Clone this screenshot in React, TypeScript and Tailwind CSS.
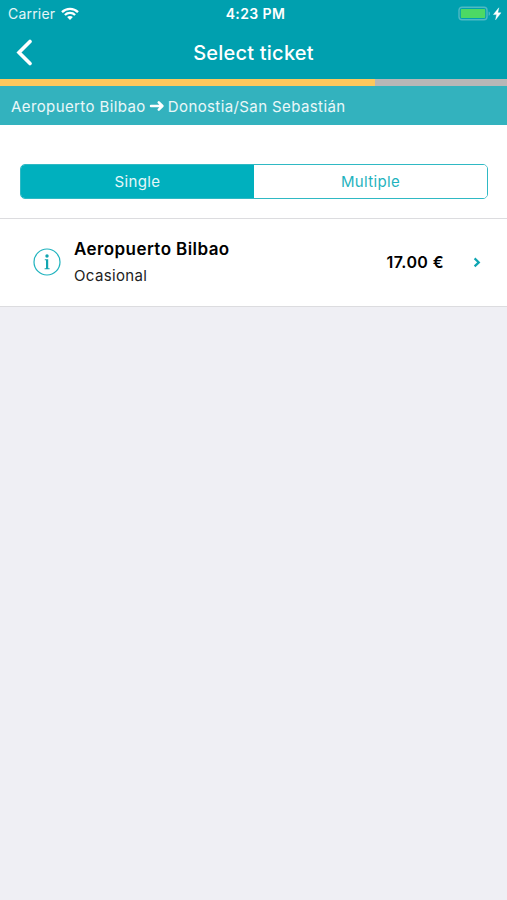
import { useState } from 'react'

const tabs = ['Single', 'Multiple']

const tickets = [
  {
    title: 'Aeropuerto Bilbao',
    type: 'Ocasional',
    price: '17.00 €',
  },
]

function WifiIcon() {
  return (
    <svg width="18" height="13" viewBox="0 0 18 13" fill="none" stroke="#fff" strokeWidth="2.3">
      <path d="M1 5.1C5.4 .7 12.6 .7 17 5.1" />
      <path d="M3.9 8C6.7 5.2 11.3 5.2 14.1 8" />
      <path d="M6.1 10.1C7.7 8.6 10.3 8.6 11.9 10.1L9 13Z" fill="#fff" stroke="none" />
    </svg>
  )
}

function BatteryIcon() {
  return (
    <svg width="46" height="16" viewBox="0 0 46 16">
      <rect x="2" y="1.2" width="28" height="12.6" rx="3" fill="none" stroke="#4fb9c4" strokeWidth="1.4" />
      <rect x="3.8" y="3" width="24.4" height="9" rx=".8" fill="#4cd964" />
      <path d="M31.6 5.4C33.5 6 33.5 9.2 31.6 9.8Z" fill="#4fb9c4" />
      <path d="M41.8 1.8L36.4 8.6H39.6L38.6 13.8L44 6.8H40.8Z" fill="#fff" stroke="#fff" strokeWidth=".4" />
    </svg>
  )
}

function InfoIcon() {
  return (
    <svg width="28" height="28" viewBox="0 0 28 28">
      <circle cx="14" cy="14" r="13" fill="none" stroke="#1fb3be" strokeWidth="1.2" />
      <circle cx="14" cy="8" r="1.7" fill="#12a5b0" />
      <path d="M11.8 11.3H15.2V20.2H16.6V21.2H11.6V20.2H13V12.3H11.8Z" fill="#12a5b0" />
    </svg>
  )
}

function StatusBar() {
  return (
    <div className="grid h-[27px] grid-cols-3 items-center pr-1 pl-2 text-white">
      <div className="flex items-center gap-1.5 text-[14px] tracking-[0.2px]">
        <span className="text-white/90">Carrier</span>
        <WifiIcon />
      </div>
      <div className="text-center text-[14px] font-semibold tracking-[0.4px]">4:23 PM</div>
      <div className="flex justify-end">
        <BatteryIcon />
      </div>
    </div>
  )
}

export default function App() {
  const [active, setActive] = useState('Single')

  return (
    <div className="flex min-h-screen w-full flex-col bg-[#efeff4] font-['Inter',sans-serif]">
      <header className="h-[79px] bg-[#00a0af]">
        <StatusBar />
        <div className="grid h-[50px] grid-cols-[64px_1fr_64px] items-center text-white">
          <button className="pl-4" aria-label="Back">
            <svg width="18" height="28" viewBox="0 0 18 28" fill="none" stroke="#fff" strokeWidth="3.6" strokeLinecap="round">
              <path d="M14 3.5L3 14.5L14 25.5" />
            </svg>
          </button>
          <h1 className="pt-0.5 text-center text-[20px] font-medium tracking-[0.22px]">Select ticket</h1>
        </div>
      </header>

      {/* Purchase progress */}
      <div className="h-[7px] bg-[#b7b7b7]">
        <div className="h-full w-[74%] bg-[#fdc85c]" />
      </div>

      <div className="flex h-[39px] items-center gap-[3px] bg-[#33b2be] pt-[3px] pl-[11px] text-[15px] tracking-[0.4px] text-white/90">
        <span>Aeropuerto Bilbao</span>
        <svg className="-mt-[3px]" width="15" height="12" viewBox="0 0 15 12" fill="none" stroke="#fff" strokeWidth="2.5" strokeLinecap="round" strokeLinejoin="round">
          <path d="M2 6H13M9.8 2.4L13.4 6L9.8 9.6" />
        </svg>
        <span className="pl-px">Donostia/San Sebastián</span>
      </div>

      <div className="h-[94px] border-b border-[#dcdcdf] bg-white pt-[39px] pr-[19px] pl-5">
        <div className="flex h-[35px] overflow-hidden rounded-[5px] border-[1.5px] border-[#2fb9c4]">
          {tabs.map((tab) => (
            <button
              key={tab}
              onClick={() => setActive(tab)}
              className={`flex-1 pt-0.5 text-[15px] tracking-[0.35px] ${tab === active ? 'bg-[#00b0be] text-white/90' : 'bg-white text-[#1fb3be]'}`}
            >
              {tab}
            </button>
          ))}
        </div>
      </div>

      {tickets.map((ticket) => (
        <div key={ticket.title} className="flex h-[88px] items-center border-b border-[#dcdcdf] bg-white pr-[26px] pb-px pl-[33px]">
          <InfoIcon />
          <div className="ml-[13px] flex-1">
            <div className="pt-px text-[17px] leading-[27px] font-semibold tracking-[0.42px] text-black">{ticket.title}</div>
            <div className="text-[15px] leading-[26px] tracking-[0.35px] text-[#222]">{ticket.type}</div>
          </div>
          <div className="text-[16px] font-semibold tracking-[0.4px] text-black">{ticket.price}</div>
          <svg className="ml-[29px]" width="8" height="12" viewBox="0 0 8 12" fill="none" stroke="#0fa5b2" strokeWidth="2.2">
            <path d="M1.6 2.4L5.8 6.4L1.6 10.4" />
          </svg>
        </div>
      ))}
    </div>
  )
}
